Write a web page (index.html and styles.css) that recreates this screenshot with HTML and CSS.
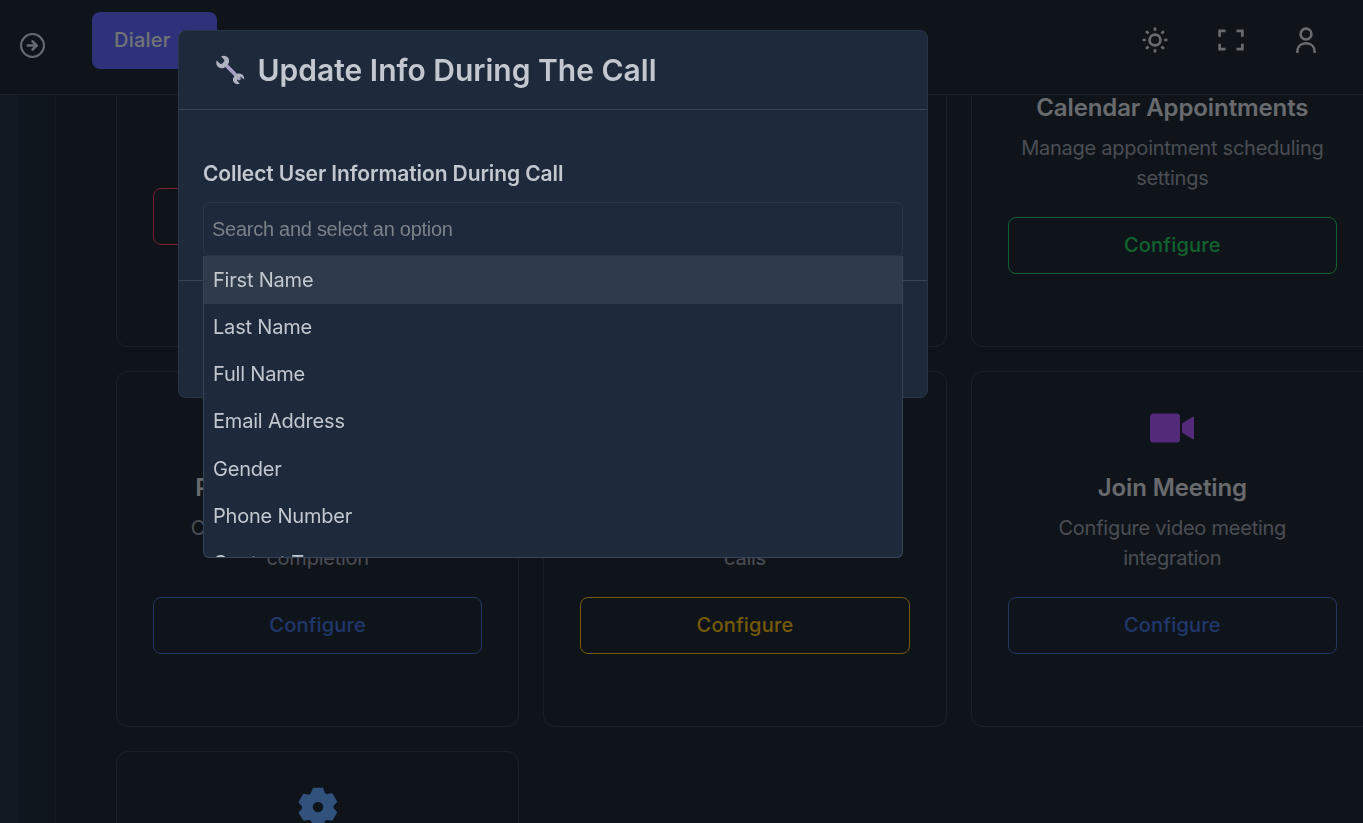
FILE: index.html
```html
<!DOCTYPE html>
<html lang="en">
  <head>
    <meta charset="UTF-8" />
    <title>Settings</title>
    <link rel="stylesheet" href="styles.css">
  </head>
  <body>
    <div class="app">
      <aside class="sideRail"></aside>
      <div class="content">
        <header class="topBar">
          <div class="topLeft">
            <svg class="arrowIcon" viewBox="0 0 24 24" fill="none" stroke="currentColor" stroke-linecap="round" stroke-linejoin="round">
              <circle cx="12" cy="12" r="11" stroke-width="2"/>
              <path d="M7.500 12h8M12 8l4 4-4 4" stroke-width="2.600"/>
            </svg>
            <button class="dialerBtn">Dialer (0)</button>
          </div>
          <div class="topRight">
            <svg class="topIcon sunIcon" viewBox="0 0 24 24" fill="none" stroke="currentColor" stroke-width="2.500">
              <circle cx="12" cy="12" r="5"/>
              <path d="M12 .5v3M12 20.500v3M.5 12h3M20.500 12h3M3.800 3.800l2.200 2.200M18 18l2.200 2.200M3.800 20.200L6 18M18 6l2.200-2.200"/>
            </svg>
            <svg class="topIcon" viewBox="0 0 24 24" fill="none" stroke="currentColor" stroke-width="2.500">
              <path d="M1.500 9V3.500h5.500M17 3.500h5.500V9M22.500 15.500V20.500H17M7 20.500H1.500v-5"/>
            </svg>
            <svg class="topIcon" viewBox="0 0 24 24" fill="none" stroke="currentColor" stroke-width="2.400" stroke-linecap="round">
              <circle cx="12" cy="6.500" r="5"/>
              <path d="M4 23c0-4.800 3.200-8 8-8s8 3.200 8 8"/>
            </svg>
          </div>
        </header>

        <main class="scrollArea">
          <div class="cardGrid">
            <section class="card">
              <div class="cardIcon"></div>
              <h3>Call Transfer</h3>
              <p>Manage call routing rules</p>
              <button class="configBtn red">Configure</button>
            </section>
            <section class="card">
              <div class="cardIcon"></div>
              <h3>Update Info</h3>
              <p>Collect user information during the call</p>
              <button class="configBtn blue">Configure</button>
            </section>
            <section class="card">
              <div class="cardIcon"></div>
              <h3>Calendar Appointments</h3>
              <p>Manage appointment scheduling settings</p>
              <button class="configBtn green">Configure</button>
            </section>
            <section class="card">
              <div class="cardIcon"></div>
              <h3>Post Call Integrations</h3>
              <p>Configure settings after call completion</p>
              <button class="configBtn navy">Configure</button>
            </section>
            <section class="card">
              <div class="cardIcon"></div>
              <h3>Voicemail Detection</h3>
              <p>Configure voicemail handling on calls</p>
              <button class="configBtn amber">Configure</button>
            </section>
            <section class="card">
              <div class="cardIcon">
                <svg class="videoIcon" viewBox="0 0 46 32">
                  <rect x="1" y="1.500" width="30" height="29" rx="3.500" fill="currentColor"/>
                  <path d="M33 11.500l10.500-6.500c1-.6 1.500 0 1.500 1v20c0 1-.5 1.600-1.500 1L33 20.500z" fill="currentColor"/>
                </svg>
              </div>
              <h3>Join Meeting</h3>
              <p>Configure video meeting integration</p>
              <button class="configBtn navy">Configure</button>
            </section>
            <section class="card">
              <div class="cardIcon">
                <svg class="gearIcon" viewBox="-1 -1 40 40">
                  <path fill="currentColor" stroke="currentColor" stroke-width="1.500" stroke-linejoin="round" fill-rule="evenodd" d="M14.500 .5h9l1.600 4.800 2.700 1.600 5-1 4.500 7.800-3.400 3.700v3.200l3.400 3.700-4.500 7.800-5-1-2.700 1.600-1.600 4.800h-9l-1.600-4.800-2.700-1.600-5 1L.3 24.800l3.400-3.700v-3.200L.3 14.200l4.500-7.800 5 1 2.700-1.600zM19 13a6 6 0 1 0 0 12 6 6 0 0 0 0-12z"/>
                </svg>
              </div>
              <h3>Advanced Settings</h3>
              <p>Configure additional call options</p>
              <button class="configBtn navy">Configure</button>
            </section>
          </div>
        </main>
      </div>
    </div>

    <div class="overlay">
      <div class="modal">
        <div class="modalHeader">
          <svg class="wrenchIcon" viewBox="0 0 30 30">
            <path d="M9.500 8.500L24 23.500" stroke="#a79fc4" stroke-width="3.800" stroke-linecap="round"/>
            <path fill="#b0b2c0" d="M1.500 5.500l4 3.500 3.200-.8.800-3.200-3.500-3.700c3-1.200 6.200-.5 7.500 2.200 1 2 .7 3.800-.2 5.300l-4 3.900c-1.800.8-3.800.8-5.500-.2C1.500 11 .8 8 1.500 5.500z"/>
            <path fill="#b0b2c0" d="M29 24.500l-3.200-2.800-3 .8-.8 3 2.800 3.300c-2.500.9-5 .2-6.200-1.800-1-1.700-.8-3.500.2-5l3.300-3.200c1.600-.6 3.300-.5 4.700.4 2 1.300 2.800 3.500 2.200 5.300z"/>
          </svg>
          <h2>Update Info During The Call</h2>
        </div>
        <div class="modalBody">
          <label for="infoSearch">Collect User Information During Call</label>
          <div class="selectWrap">
            <input id="infoSearch" type="text" placeholder="Search and select an option" />
            <ul class="optionList">
              <li class="active">First Name</li>
              <li>Last Name</li>
              <li>Full Name</li>
              <li>Email Address</li>
              <li>Gender</li>
              <li>Phone Number</li>
              <li>Contact Type</li>
            </ul>
          </div>
        </div>
        <div class="modalFooter"></div>
      </div>
    </div>
  </body>
</html>
```

FILE: styles.css
```css
* {
  box-sizing: border-box;
}

html,
body {
  height: 100%;
  margin: 0;
  overflow: hidden;
}

body {
  background-color: #1f2937;
  color: #d1d5db;
  font-family: Inter, "Liberation Sans", sans-serif;
}

.app {
  display: flex;
  height: 823px;
}

/* Rail behind the page, mostly hidden */
.sideRail {
  flex: 0 0 56px;
  margin-top: 95px;
  border-right: 1px solid #2a3442;
  background: linear-gradient(to right, #263344 0, #263344 19px, #212c3b 19px);
}

.content {
  flex: 1;
  min-width: 0;
  margin-left: -56px;
}

/* Top bar */
.topBar {
  position: relative;
  z-index: 1;
  display: flex;
  justify-content: space-between;
  height: 95px;
  padding: 12px 44px 0 20px;
  background-color: #1f2937;
  border-bottom: 1px solid #374151;
}

.topLeft {
  display: flex;
  align-items: flex-start;
  gap: 47px;
}

.arrowIcon {
  width: 25px;
  height: 25px;
  margin-top: 21px;
  color: #cbd5e1;
}

.dialerBtn {
  width: 125px;
  height: 57px;
  padding: 0 22px 2px;
  border: none;
  border-radius: 8px;
  background-color: #5b64f5;
  color: #e5e7eb;
  font: 500 20px Inter, sans-serif;
  letter-spacing: 0.25px;
  text-align: left;
  white-space: nowrap;
}

.topRight {
  display: flex;
  align-items: flex-start;
  gap: 49px;
  padding-top: 15px;
}

.topIcon {
  width: 26px;
  height: 26px;
  color: #d1d5db;
}

.sunIcon {
  margin-right: 1px;
}

/* Cards, scrolled under the top bar */
.scrollArea {
  height: 728px;
  overflow: hidden;
  padding-left: 116px;
}

.cardGrid {
  display: grid;
  grid-template-columns: repeat(3, 403.330px);
  grid-auto-rows: 356px;
  gap: 24px;
  margin-top: -104px;
}

.card {
  padding: 40px 36px 0;
  border: 1px solid #374151;
  border-radius: 12px;
  text-align: center;
}

.cardIcon {
  display: flex;
  justify-content: center;
  align-items: center;
  height: 32px;
  margin-bottom: 28px;
}

.videoIcon {
  width: 46px;
  height: 32px;
  margin-left: -1px;
  color: #a855f7;
}

.gearIcon {
  flex-shrink: 0;
  width: 40px;
  height: 40px;
  margin-bottom: 2px;
  color: #60a5fa;
}

.card h3 {
  margin: 0 0 10px;
  font-size: 24px;
  line-height: 32px;
  font-weight: 600;
  letter-spacing: -0.1px;
}

.card p {
  margin: 0 0 24px;
  font-size: 20px;
  line-height: 29.500px;
  letter-spacing: -0.24px;
  color: #949aa6;
}

.configBtn {
  display: block;
  width: 100%;
  height: 57px;
  padding-bottom: 3px;
  border: 1px solid;
  border-radius: 8px;
  background: transparent;
  font: 500 20px Inter, sans-serif;
  letter-spacing: 0.2px;
}

.red {
  border-color: #f43f5e;
  color: #f43f5e;
}

.blue {
  border-color: #3b82f6;
  color: #3b82f6;
}

.navy {
  border-color: #4b6bc8;
  color: #3f6fd8;
}

.green {
  border-color: #22c55e;
  color: #22c55e;
}

.amber {
  border-color: #eab308;
  color: #eab308;
}

/* Modal */
.overlay {
  position: fixed;
  top: 0;
  left: 0;
  right: 0;
  bottom: 0;
  z-index: 10;
  background-color: rgba(0, 0, 0, 0.5);
}

.modal {
  position: absolute;
  top: 30px;
  left: 178px;
  width: 750px;
  height: 368px;
  display: flex;
  flex-direction: column;
  border: 1px solid #2a3648;
  border-radius: 8px;
  background-color: #1e293b;
  color: #c3c7cf;
}

.modalHeader {
  display: flex;
  align-items: center;
  gap: 12.500px;
  height: 79px;
  padding: 0 36px;
  border-bottom: 1px solid #374357;
}

.wrenchIcon {
  width: 30px;
  height: 30px;
  flex-shrink: 0;
}

.modalHeader h2 {
  margin: 0;
  font-size: 30px;
  font-weight: 600;
}

.modalBody {
  height: 171px;
  padding: 49px 24px 0;
  border-bottom: 1px solid #374357;
}

.modalBody label {
  display: block;
  margin-bottom: 13px;
  font-size: 21px;
  line-height: 30px;
  font-weight: 600;
  letter-spacing: -0.1px;
}

.selectWrap {
  position: relative;
}

.selectWrap input {
  display: block;
  width: 100%;
  height: 54px;
  padding: 0 8px;
  border: 1px solid #2a3648;
  border-radius: 6px;
  outline: none;
  background-color: #1e293b;
  color: #c3c7cf;
  font: 20px "Liberation Sans", Arial, sans-serif;
  letter-spacing: -0.27px;
}

.selectWrap input::placeholder {
  color: #7c8088;
}

.optionList {
  position: absolute;
  top: 54px;
  left: 0;
  right: 0;
  height: 302px;
  margin: 0;
  padding: 0;
  overflow: hidden;
  list-style: none;
  border: 1px solid #374357;
  border-top: none;
  border-radius: 0 0 6px 6px;
  background-color: #1e293b;
}

.optionList li {
  height: 47.200px;
  padding: 0.6px 9px 0;
  font-size: 20px;
  line-height: 47.200px;
  letter-spacing: -0.2px;
}

.optionList .active {
  height: 47.800px;
  margin-bottom: -0.4px;
  background-color: #2f3a4b;
}
```
